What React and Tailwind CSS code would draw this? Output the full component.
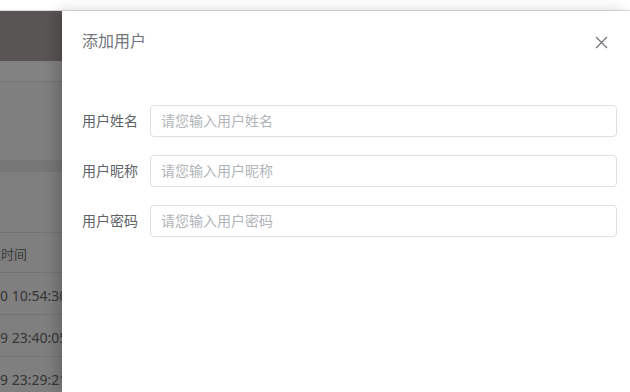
import React from "react";

const font = { fontFamily: '"Liberation Sans", "Noto Sans CJK SC", sans-serif' };
const numFont = { fontFamily: '"Noto Sans", "Noto Sans CJK SC", sans-serif' };

function Field({ label, placeholder }) {
  return (
    <div className="flex items-center h-8">
      <label className="w-[68px] shrink-0 text-[14px] text-[#606266] leading-8">{label}</label>
      <div className="flex-1 h-8 rounded-[4px] border border-[#dcdfe6] bg-white flex items-center px-[10px]">
        <span className="text-[14px] text-[#b1b4b9]">{placeholder}</span>
      </div>
    </div>
  );
}

export default function App() {
  return (
    <div className="w-[630px] h-[392px] overflow-hidden bg-white flex flex-col" style={font}>
      <div className="h-[11px] shrink-0 bg-white border-b border-[#dedede]" />
      <div className="flex flex-1 min-h-0">
        {/* dimmed page behind the drawer */}
        <div className="w-[62px] shrink-0 flex flex-col bg-[#7f7f7f] overflow-hidden">
          <div className="h-[50px] shrink-0 bg-[#5a5555]" />
          <div className="h-[21px] shrink-0 bg-[#828282] border-b border-[#767676]" />
          <div className="h-[78px] shrink-0 bg-[#7f7f7f]" />
          <div className="h-[12px] shrink-0 bg-[#777777] border-y border-[#747474]" />
          <div className="h-[61px] shrink-0 border-b border-[#747474]" />
          <div className="h-[40px] shrink-0 border-b border-[#747474] flex items-center pt-[4px]">
            <span className="whitespace-nowrap ml-[-25px] text-[13px] text-[#3a3a3a]">创建时间</span>
          </div>
          {["2023-07-20 10:54:30", "2023-07-19 23:40:05", "2023-07-19 23:29:21"].map((t) => (
            <div key={t} className="h-[42px] shrink-0 border-b border-[#747474] flex items-center pt-[3px]">
              <span className="whitespace-nowrap ml-[-65px] text-[14px] text-[#363636]" style={numFont}>{t}</span>
            </div>
          ))}
        </div>
        {/* drawer */}
        <div className="relative z-10 flex-1 bg-white shadow-[-6px_0_12px_rgba(0,0,0,0.18)] flex flex-col pl-5 pr-[13px] pt-5">
          <div className="flex items-center justify-between h-[22px] pr-[9px]">
            <span className="text-[16px] text-[#72767b]">添加用户</span>
            <svg width="13" height="13" viewBox="0 0 13 13" className="text-[#72767b]">
              <path d="M1 1 L12 12 M12 1 L1 12" stroke="currentColor" strokeWidth="1.3" fill="none" />
            </svg>
          </div>
          <div className="mt-[52px] flex flex-col gap-[18px]">
            <Field label="用户姓名" placeholder="请您输入用户姓名" />
            <Field label="用户昵称" placeholder="请您输入用户昵称" />
            <Field label="用户密码" placeholder="请您输入用户密码" />
          </div>
        </div>
      </div>
    </div>
  );
}
